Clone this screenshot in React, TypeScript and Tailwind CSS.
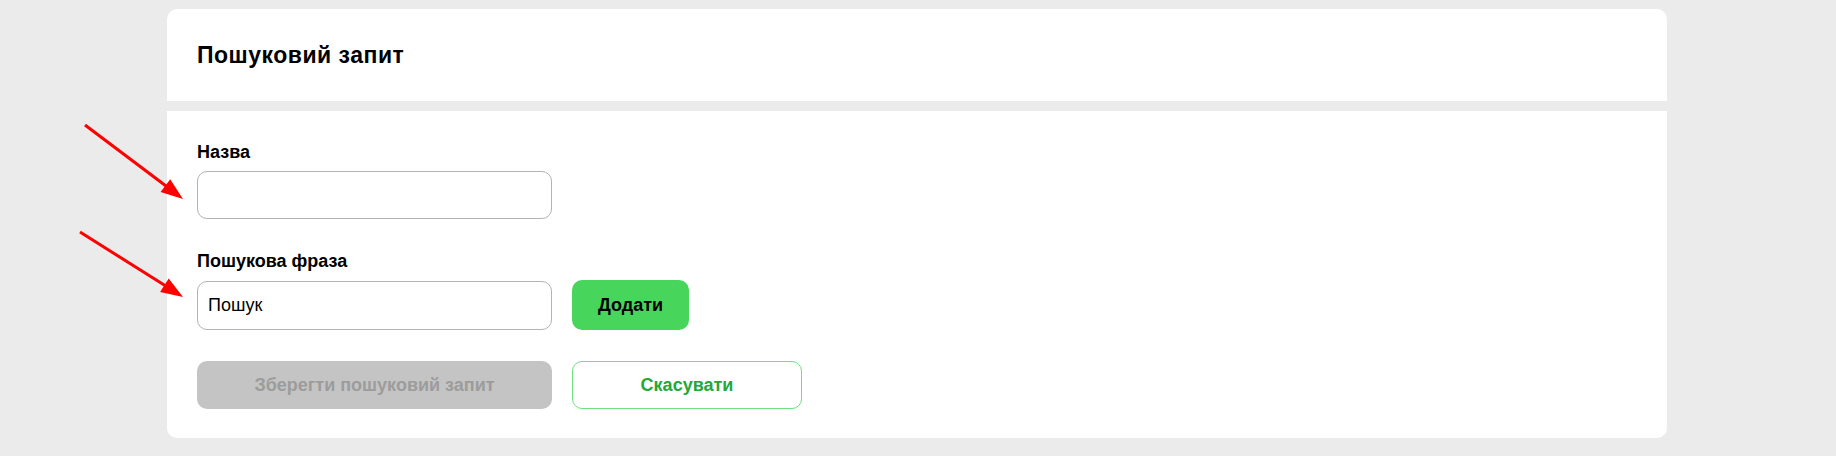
import React from "react";

function Arrows() {
  return (
    <svg
      className="pointer-events-none absolute left-0 top-0"
      width={1836}
      height={456}
      viewBox="0 0 1836 456"
    >
      <line x1={85} y1={125} x2={166} y2={186} stroke="#ff0000" strokeWidth={3} />
      <polygon points="183,199 160.6,192.1 170.2,179.3" fill="#ff0000" />
      <line x1={80} y1={232} x2={165} y2={285.6} stroke="#ff0000" strokeWidth={3} />
      <polygon points="183,297 160.1,292.1 168.7,278.5" fill="#ff0000" />
    </svg>
  );
}

export default function App() {
  return (
    <div
      className="relative min-h-[456px] w-full bg-[#ebebeb] pt-[9px]"
      style={{ fontFamily: '"Liberation Sans", Arial, sans-serif' }}
    >
      <div className="ml-[167px] w-[1500px]">
        <div className="flex h-[92px] items-center rounded-t-[10px] bg-white px-[30px]">
          <h2 className="text-[23px] font-bold leading-none tracking-[0.5px] text-black">Пошуковий запит</h2>
        </div>
        <div className="mt-[10px] rounded-b-[10px] bg-white px-[30px] pb-[29px] pt-[30px]">
          <div className="flex flex-col">
            <label className="mb-[8px] text-[18px] font-bold leading-[22px] text-black">Назва</label>
            <input
              className="h-[48px] w-[355px] rounded-[10px] border border-[#b3b3b3] bg-white px-[10px] text-[18px] text-black outline-none"
              style={{ fontFamily: '"Liberation Sans", Arial, sans-serif' }}
            />
          </div>
          <div className="mt-[31px] flex flex-col">
            <label className="mb-[8px] text-[18px] font-bold leading-[22px] text-black">Пошукова фраза</label>
            <div className="flex items-center gap-[20px]">
              <input
                defaultValue="Пошук"
                className="h-[49px] w-[355px] rounded-[10px] border border-[#b3b3b3] bg-white px-[10px] text-[18px] text-black outline-none"
                style={{ fontFamily: '"Liberation Sans", Arial, sans-serif' }}
              />
              <button className="h-[50px] w-[117px] rounded-[10px] bg-[#47d55b] text-[18px] font-bold text-black">
                Додати
              </button>
            </div>
          </div>
          <div className="mt-[31px] flex items-center gap-[20px]">
            <button className="h-[48px] w-[355px] rounded-[10px] bg-[#c4c4c4] text-[18px] font-bold text-[#9c9c9c]">
              Зберегти пошуковий запит
            </button>
            <button className="h-[48px] w-[230px] rounded-[10px] border border-[#6fe07f] bg-white text-[18px] font-bold text-[#22a739]">
              Скасувати
            </button>
          </div>
        </div>
      </div>
      <Arrows />
    </div>
  );
}
